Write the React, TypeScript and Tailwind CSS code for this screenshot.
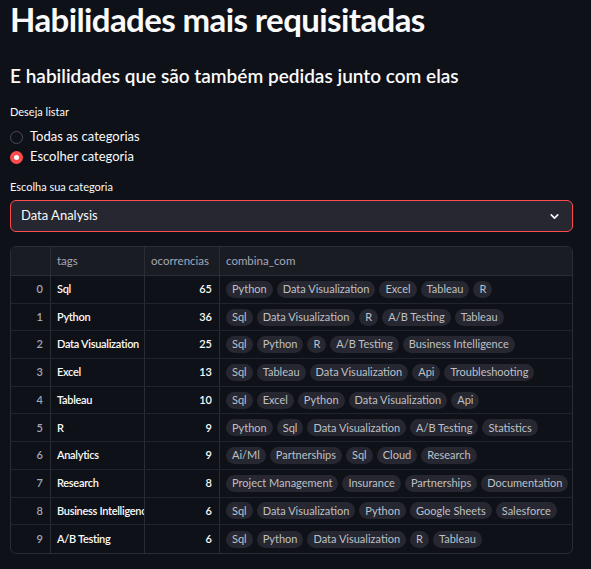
import { ChevronDown } from "lucide-react";

type Row = {
    idx: number;
    tag: string;
    count: number;
    combos: string[];
};

const rows: Row[] = [
    { idx: 0, tag: "Sql", count: 65, combos: ["Python", "Data Visualization", "Excel", "Tableau", "R"] },
    { idx: 1, tag: "Python", count: 36, combos: ["Sql", "Data Visualization", "R", "A/B Testing", "Tableau"] },
    { idx: 2, tag: "Data Visualization", count: 25, combos: ["Sql", "Python", "R", "A/B Testing", "Business Intelligence"] },
    { idx: 3, tag: "Excel", count: 13, combos: ["Sql", "Tableau", "Data Visualization", "Api", "Troubleshooting"] },
    { idx: 4, tag: "Tableau", count: 10, combos: ["Sql", "Excel", "Python", "Data Visualization", "Api"] },
    { idx: 5, tag: "R", count: 9, combos: ["Python", "Sql", "Data Visualization", "A/B Testing", "Statistics"] },
    { idx: 6, tag: "Analytics", count: 9, combos: ["Ai/Ml", "Partnerships", "Sql", "Cloud", "Research"] },
    { idx: 7, tag: "Research", count: 8, combos: ["Project Management", "Insurance", "Partnerships", "Documentation", "Sql"] },
    { idx: 8, tag: "Business Intelligence", count: 6, combos: ["Sql", "Data Visualization", "Python", "Google Sheets", "Salesforce"] },
    { idx: 9, tag: "A/B Testing", count: 6, combos: ["Sql", "Python", "Data Visualization", "R", "Tableau"] },
];

function Radio({ label, checked }: { label: string; checked?: boolean }) {
    return (
        <div className="flex items-center h-[20px]">
            {checked ? (
                <span className="w-[13px] h-[13px] rounded-full bg-[#ff4b4b] flex items-center justify-center">
                    <span className="w-[5px] h-[5px] rounded-full bg-white" />
                </span>
            ) : (
                <span className="w-[13px] h-[13px] rounded-full border border-[#4a4c55]" />
            )}
            <span className="ml-[7px] text-[13px] text-[#fafafa]">{label}</span>
        </div>
    );
}

export default function App() {
    return (
        <div
            className="w-[591px] h-[569px] bg-[#0e1117] overflow-hidden pl-[10px]"
            style={{ fontFamily: "Lato, 'Open Sans', sans-serif" }}
        >
            {/* titulos */}
            <h1 className="text-[33px] leading-[40px] font-bold tracking-[-0.6px] text-[#fafafa] mt-[-1px]">
                Habilidades mais requisitadas
            </h1>
            <h3 className="text-[19px] leading-[24px] font-semibold text-[#fafafa] mt-[25px]">
                E habilidades que são também pedidas junto com elas
            </h3>

            {/* radio */}
            <div className="mt-[17px] text-[11px] leading-[14px] text-[#fafafa]">Deseja listar</div>
            <div className="mt-[8px] flex flex-col">
                <Radio label="Todas as categorias" />
                <Radio label="Escolher categoria" checked />
            </div>

            {/* select */}
            <div className="mt-[13px] text-[11px] leading-[14px] text-[#fafafa]">Escolha sua categoria</div>
            <div className="mt-[6px] w-[563px] h-[32px] rounded-[6px] border border-[#ff4b4b] bg-[#262730] flex items-center justify-between pl-[10px] pr-[11px]">
                <span className="text-[13px] text-[#fafafa]">Data Analysis</span>
                <ChevronDown size={13} strokeWidth={3} className="text-[#fafafa]" />
            </div>

            {/* tabela */}
            <div className="mt-[14px] w-[563px] rounded-[6px] border border-[#2b2d35] overflow-hidden text-[11.5px]">
                <div className="flex h-[29px] bg-[#1a1c24] border-b border-[#2b2d35] text-[#a3a8b8]">
                    <div className="w-[40px] border-r border-[#2b2d35]" />
                    <div className="w-[94px] border-r border-[#2b2d35] flex items-center pl-[6px]">tags</div>
                    <div className="w-[75px] border-r border-[#2b2d35] flex items-center pl-[6px]">ocorrencias</div>
                    <div className="flex-1 flex items-center pl-[6px]">combina_com</div>
                </div>
                {rows.map((r, i) => (
                    <div
                        key={r.idx}
                        className={`flex h-[27.7px] ${i < rows.length - 1 ? "border-b border-[#22242c]" : ""}`}
                    >
                        <div className="w-[40px] border-r border-[#2b2d35] flex items-center justify-end pr-[7px] text-[#a3a8b8] font-semibold text-[11px]">
                            {r.idx}
                        </div>
                        <div className="w-[94px] border-r border-[#2b2d35] flex items-center pl-[6px] text-[#fafafa] font-semibold text-[11px] tracking-[-0.3px] whitespace-nowrap overflow-hidden">
                            {r.tag}
                        </div>
                        <div className="w-[75px] border-r border-[#2b2d35] flex items-center justify-end pr-[7px] text-[#fafafa] font-semibold text-[11px]">
                            {r.count}
                        </div>
                        <div className="flex-1 flex items-center gap-[4px] pl-[6px] overflow-hidden whitespace-nowrap text-[11px]">
                            {r.combos.map((c, k) => (
                                <span
                                    key={k}
                                    className="h-[17px] px-[6px] rounded-full bg-[#262730] text-[#bfc0c6] flex items-center shrink-0"
                                >
                                    {c}
                                </span>
                            ))}
                        </div>
                    </div>
                ))}
            </div>
        </div>
    );
}
